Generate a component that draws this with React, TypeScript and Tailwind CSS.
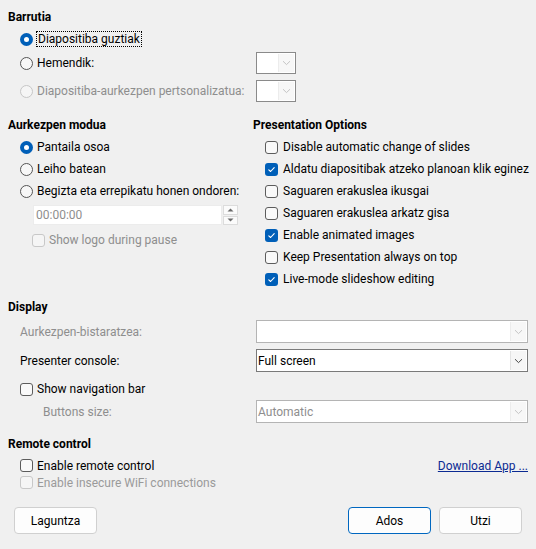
import React from "react";

const Radio = ({ checked, disabled }: { checked?: boolean; disabled?: boolean }) => {
  if (checked) {
    return (
      <span className="flex h-[13px] w-[13px] shrink-0 items-center justify-center rounded-full bg-[#005fb8]">
        <span className="h-[5px] w-[5px] rounded-full bg-white" />
      </span>
    );
  }
  return (
    <span
      className={
        disabled
          ? "h-[13px] w-[13px] shrink-0 rounded-full border border-[#c6c6c6] bg-[#f5f5f5]"
          : "h-[13px] w-[13px] shrink-0 rounded-full border border-[#555555] bg-[#f7f7f7]"
      }
    />
  );
};

const Check = ({ checked, disabled }: { checked?: boolean; disabled?: boolean }) => {
  if (checked) {
    return (
      <span className="flex h-[13px] w-[13px] shrink-0 items-center justify-center rounded-[3px] bg-[#005fb8]">
        <svg width="9" height="9" viewBox="0 0 9 9" fill="none">
          <path d="M1.8 4.8 L3.6 6.5 L7.2 2.6" stroke="white" strokeWidth="1.1" strokeLinecap="round" strokeLinejoin="round" />
        </svg>
      </span>
    );
  }
  return (
    <span
      className={
        disabled
          ? "h-[13px] w-[13px] shrink-0 rounded-[3px] border border-[#c8c8c8] bg-[#f5f5f5]"
          : "h-[13px] w-[13px] shrink-0 rounded-[3px] border border-[#5c5c5c] bg-[#f9f9f9]"
      }
    />
  );
};

const Chevron = ({ disabled }: { disabled?: boolean }) => (
  <svg width="9" height="6" viewBox="0 0 9 6" fill="none">
    <path d="M1 1.2 L4.5 4.6 L8 1.2" stroke={disabled ? "#bdbdbd" : "#333333"} strokeWidth="0.9" />
  </svg>
);

const Combo = ({
  width,
  value,
  disabled,
  height = "h-[23px]",
  border,
}: {
  width: string;
  value?: string;
  disabled?: boolean;
  height?: string;
  border?: string;
}) => (
  <div
    className={`${width} ${height} flex shrink-0 items-stretch border bg-white ${
      border ?? (disabled ? "border-[#b4b4b4]" : "border-[#7a7a7a]")
    }`}
  >
    <div className={`flex flex-1 items-center pl-[1px] ${disabled ? "text-[#8e8e8e]" : "text-black"}`}>{value}</div>
    <div
      className={`my-[1px] mr-[1px] flex w-[16px] items-center justify-center border-l ${
        disabled ? "border-[#ececec] bg-[#f7f7f7]" : "border-[#e3e3e3] bg-[#f6f6f6]"
      }`}
    >
      <Chevron disabled={disabled} />
    </div>
  </div>
);

const Heading = ({ children }: { children: React.ReactNode }) => (
  <div className="flex h-[22px] items-center font-bold text-black">{children}</div>
);

const CheckRow = ({ label, checked }: { label: string; checked?: boolean }) => (
  <div className="flex h-[22px] items-center gap-[5px] pl-[12px]">
    <Check checked={checked} />
    <span>{label}</span>
  </div>
);

const Button = ({ label, primary }: { label: string; primary?: boolean }) => (
  <div
    className={`flex h-[27px] w-[83px] items-center justify-center rounded-[4px] bg-[#fdfdfd] text-black ${
      primary ? "border border-[#0067c0]" : "border border-[#d0d0d0]"
    }`}
  >
    {label}
  </div>
);

export default function App() {
  return (
    <div className="flex h-[549px] w-[536px] flex-col whitespace-nowrap bg-[#f0f0f0] px-[8px] pt-[6px] text-[12px] leading-none text-black [font-family:Roboto,'Noto_Sans',sans-serif]">
      {/* Barrutia */}
      <Heading>Barrutia</Heading>
      <div className="flex h-[22px] items-center gap-[3px] pl-[12px]">
        <Radio checked />
        <span className="border border-dotted border-black px-[1px] py-[1px]">Diapositiba guztiak</span>
      </div>
      <div className="mt-[2px] flex h-[22px] items-center">
        <div className="flex w-[248px] items-center gap-[4px] pl-[12px]">
          <Radio />
          <span>Hemendik:</span>
        </div>
        <Combo width="w-[40px]" height="h-[22px]" border="border-[#8a8a8a]" disabled />
      </div>
      <div className="mt-[6px] flex h-[22px] items-center">
        <div className="flex w-[248px] items-center gap-[4px] pl-[12px] text-[#8e8e8e]">
          <Radio disabled />
          <span>Diapositiba-aurkezpen pertsonalizatua:</span>
        </div>
        <Combo width="w-[40px]" height="h-[22px]" border="border-[#8a8a8a]" disabled />
      </div>

      {/* Two columns */}
      <div className="mt-[12px] grid grid-cols-[245px_1fr]">
        <div className="flex flex-col">
          <Heading>Aurkezpen modua</Heading>
          <div className="flex h-[22px] items-center gap-[4px] pl-[12px]">
            <Radio checked />
            <span>Pantaila osoa</span>
          </div>
          <div className="flex h-[22px] items-center gap-[4px] pl-[12px]">
            <Radio />
            <span>Leiho batean</span>
          </div>
          <div className="flex h-[22px] items-center gap-[4px] pl-[12px]">
            <Radio />
            <span>Begizta eta errepikatu honen ondoren:</span>
          </div>
          <div className="ml-[25px] mt-[3px] flex h-[20px] w-[205px]">
            <div className="flex flex-1 items-center border border-[#ececec] bg-white pl-[2px] text-[#8e8e8e]">00:00:00</div>
            <div className="ml-[1px] flex w-[15px] flex-col gap-[1px]">
              <div className="flex flex-1 items-center justify-center border border-[#dcdcdc] bg-[#fbfbfb]">
                <svg width="7" height="4" viewBox="0 0 7 4">
                  <path d="M0.5 3.5 L3.5 0.5 L6.5 3.5 Z" fill="#6a6a6a" />
                </svg>
              </div>
              <div className="flex flex-1 items-center justify-center border border-[#dcdcdc] bg-[#fbfbfb]">
                <svg width="7" height="4" viewBox="0 0 7 4">
                  <path d="M0.5 0.5 L3.5 3.5 L6.5 0.5 Z" fill="#6a6a6a" />
                </svg>
              </div>
            </div>
          </div>
          <div className="mt-[4px] flex h-[22px] items-center gap-[4px] pl-[24px] text-[#8e8e8e]">
            <Check disabled />
            <span>Show logo during pause</span>
          </div>
        </div>
        <div className="flex flex-col">
          <Heading>Presentation Options</Heading>
          <CheckRow label="Disable automatic change of slides" />
          <CheckRow label="Aldatu diapositibak atzeko planoan klik eginez" checked />
          <CheckRow label="Saguaren erakuslea ikusgai" />
          <CheckRow label="Saguaren erakuslea arkatz gisa" />
          <CheckRow label="Enable animated images" checked />
          <CheckRow label="Keep Presentation always on top" />
          <CheckRow label="Live-mode slideshow editing" checked />
        </div>
      </div>

      {/* Display */}
      <div className="mt-[6px]">
        <Heading>Display</Heading>
      </div>
      <div className="mt-[2px] flex h-[23px] items-center">
        <div className="w-[248px] pl-[12px] text-[#8e8e8e]">Aurkezpen-bistaratzea:</div>
        <Combo width="w-[272px]" disabled />
      </div>
      <div className="mt-[6px] flex h-[23px] items-center">
        <div className="w-[248px] pl-[12px]">Presenter console:</div>
        <Combo width="w-[272px]" value="Full screen" />
      </div>
      <div className="mt-[6px] flex h-[22px] items-center gap-[4px] pl-[12px]">
        <Check />
        <span>Show navigation bar</span>
      </div>
      <div className="flex h-[23px] items-center">
        <div className="w-[248px] pl-[35px] text-[#8e8e8e]">Buttons size:</div>
        <Combo width="w-[272px]" value="Automatic" disabled />
      </div>

      {/* Remote control */}
      <div className="mt-[10px]">
        <Heading>Remote control</Heading>
      </div>
      <div className="mt-[2px] flex h-[17px] items-center pl-[12px]">
        <div className="flex items-center gap-[4px]">
          <Check />
          <span>Enable remote control</span>
        </div>
        <span className="ml-auto text-[#0b2a92] underline">Download App ...</span>
      </div>
      <div className="flex h-[17px] items-center gap-[4px] pl-[12px] text-[#9a9a9a]">
        <Check disabled />
        <span>Enable insecure WiFi connections</span>
      </div>

      <div className="mt-[16px] flex items-center px-[6px]">
        <Button label="Laguntza" />
        <div className="ml-auto flex gap-[8px]">
          <Button label="Ados" primary />
          <Button label="Utzi" />
        </div>
      </div>
    </div>
  );
}
